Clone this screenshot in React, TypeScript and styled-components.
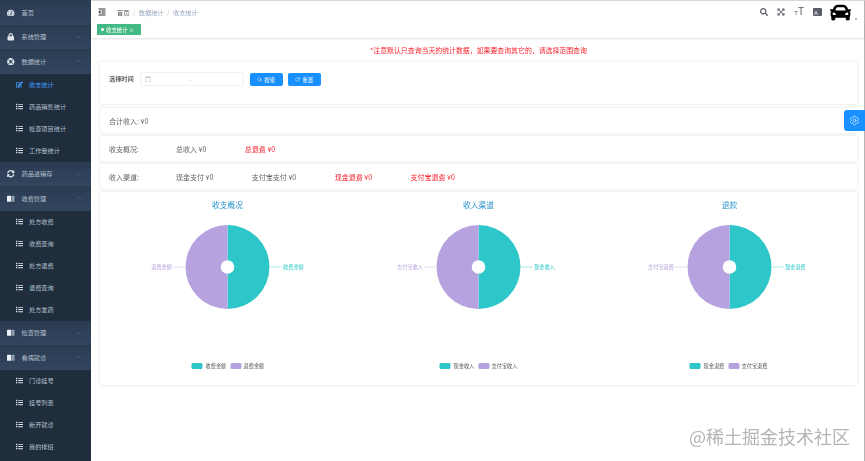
import { FC, ReactNode } from 'react'
import styled, { createGlobalStyle } from 'styled-components'
import {
    FaTachometerAlt, FaLock, FaLifeRing, FaList, FaEdit, FaSyncAlt,
    FaOutdent, FaSearch, FaExpandArrowsAlt, FaCar, FaRegCalendar, FaCaretDown,
} from 'react-icons/fa'
import { Search, RotateCw, ChevronDown, ChevronUp, Settings } from 'lucide-react'

const GlobalStyle = createGlobalStyle`
    html, body {
        margin: 0;
        padding: 0;
        background: white;
    }
    body {
        font-family: "Noto Sans CJK SC", "Liberation Sans", sans-serif;
        font-size: 6.2px;
        color: #606266;
    }
`;

const Layout = styled.div`
    display: flex;
    width: 865px;
    height: 461px;
    overflow: hidden;
    position: relative;
    filter: blur(0.3px);
`;

const Sidebar = styled.div`
    width: 91px;
    flex-shrink: 0;
    background: #1f2d3d;
    color: #b4c0ce;
`;

const ParentItem = styled.div`
    height: 24.5px;
    display: flex;
    align-items: center;
    gap: 7px;
    padding: 0 8px 0 7px;
    background: linear-gradient(180deg, #2a3b52 0%, #34465e 100%);

    & > svg:first-child {
        width: 7.5px;
        height: 7.5px;
        color: #dfe6ee;
    }

    & > svg:last-child:not(:first-child) {
        margin-left: auto;
        width: 8px;
        height: 8px;
        color: #5f7086;
    }
`;

const SubItem = styled.div<{ $active?: boolean }>`
    height: 22px;
    display: flex;
    align-items: center;
    gap: 6px;
    padding-left: 16px;
    color: ${p => (p.$active ? '#409eff' : '#b4c0ce')};

    svg {
        font-size: 7px;
        color: ${p => (p.$active ? '#409eff' : '#dfe6ee')};
    }
`;

const Main = styled.div`
    flex: 1;
    min-width: 0;
    display: flex;
    flex-direction: column;
    border-top: 1px solid #d8d8d8;
    border-right: 1px solid #b5b5b5;
`;

const Header = styled.div`
    height: 22px;
    display: flex;
    align-items: center;
    padding: 0 6px 0 7px;
    flex-shrink: 0;
`;

const Breadcrumb = styled.div`
    display: flex;
    align-items: center;
    margin-left: 11px;
    color: #97a8be;

    b {
        font-weight: 400;
        color: #50555c;
    }

    i {
        font-style: normal;
        margin: 0 3.5px;
        color: #c0c4cc;
    }
`;

const HeaderIcons = styled.div`
    margin-left: auto;
    display: flex;
    align-items: center;
    gap: 9px;
    color: #5a5e66;
    font-size: 8px;
`;

const SizeIcon = styled.span`
    font-family: "Liberation Sans", sans-serif;
    font-size: 10px;
    line-height: 1;

    small {
        font-size: 6px;
    }
`;

const Avatar = styled.div`
    display: flex;
    align-items: flex-end;
    gap: 3px;
    margin-left: -1px;
    color: #000;
    font-size: 21px;

    svg + svg {
        font-size: 4px;
        color: #5a5e66;
        margin-bottom: 2px;
    }
`;

const TagBar = styled.div`
    height: 15px;
    flex-shrink: 0;
    padding: 1px 6px;
    box-sizing: border-box;
    box-shadow: 0 1px 2px rgba(0, 0, 0, 0.12);
`;

const Tag = styled.div`
    width: 44px;
    height: 11px;
    display: flex;
    align-items: center;
    gap: 2px;
    padding-left: 4px;
    box-sizing: border-box;
    background: #42b983;
    color: white;
    font-size: 5.4px;

    &::before {
        content: '';
        width: 3px;
        height: 3px;
        border-radius: 50%;
        background: white;
    }
`;

const Content = styled.div`
    padding: 0 7px 0 9px;
    display: flex;
    flex-direction: column;
`;

const Notice = styled.div`
    height: 24px;
    display: flex;
    align-items: center;
    justify-content: center;
    font-size: 6.9px;
    color: #f5222d;
`;

const Card = styled.div`
    background: white;
    box-shadow: 0 0 3px rgba(0, 0, 0, 0.13);
    margin-bottom: 3px;
`;

const SearchCard = styled(Card)`
    height: 42px;
    margin-bottom: 4px;
    padding: 10px 9px 0;
    box-sizing: border-box;
    display: flex;
    align-items: flex-start;
`;

const FieldLabel = styled.span`
    font-weight: 700;
    color: #606266;
    line-height: 14px;
    margin-right: 6px;
`;

const DateInput = styled.div`
    width: 104px;
    height: 14px;
    box-sizing: border-box;
    border: 1px solid #f0f0f0;
    border-radius: 2px;
    display: flex;
    align-items: center;
    padding-left: 4px;
    color: #c0c4cc;
    margin-right: 6px;

    span {
        margin-left: 38px;
    }
`;

const Button = styled.div`
    width: 33px;
    height: 13px;
    margin: 1px 5px 0 0;
    display: flex;
    align-items: center;
    justify-content: center;
    gap: 2px;
    background: #1890ff;
    border-radius: 2px;
    color: white;
    font-size: 5.6px;
`;

const StatRow = styled(Card)`
    height: 25px;
    display: flex;
    align-items: center;
    gap: 38.5px;
    padding-left: 9px;
    font-size: 7px;
    white-space: nowrap;
`;

const StatLabel = styled.span`
    width: 28.5px;
`;

const Stat = styled.span<{ $danger?: boolean }>`
    color: ${p => (p.$danger ? '#f5222d' : '#606266')};
`;

const ChartsCard = styled(Card)`
    height: 193px;
    display: flex;
    justify-content: center;
`;

const ChartSvg = styled.svg`
    flex: 0 0 251px;
    height: 193px;
    font-family: "Noto Sans CJK SC", sans-serif;
`;

const SettingsButton = styled.div`
    position: absolute;
    top: 110px;
    right: 0;
    width: 21px;
    height: 21px;
    display: flex;
    align-items: center;
    justify-content: center;
    background: #1890ff;
    border-radius: 3px 0 0 3px;
    color: #d5e9ff;
`;

const Watermark = styled.div`
    position: absolute;
    right: 15px;
    bottom: 15px;
    font-size: 18px;
    line-height: 20px;
    color: #b4b4b4;
`;

// two tone book, react-icons has no close match for this one
const BookIcon: FC = () => (
    <svg viewBox="0 0 8 8">
        <rect x="0" y="0.8" width="4.4" height="6.4" rx="0.6" fill="#eef2f6" />
        <rect x="4.8" y="0.8" width="3.2" height="6.4" rx="0.6" fill="#8e9caf" />
    </svg>
);

const MenuParent: FC<{ icon: ReactNode; label: string; open?: boolean; noArrow?: boolean }> = ({ icon, label, open, noArrow }) => (
    <ParentItem>
        {icon}
        <span>{label}</span>
        {!noArrow && (open ? <ChevronUp strokeWidth={1.5} /> : <ChevronDown strokeWidth={1.5} />)}
    </ParentItem>
);

const SubList: FC<{ items: string[] }> = ({ items }) => (
    <>
        {items.map(item => (
            <SubItem key={item}><FaList />{item}</SubItem>
        ))}
    </>
);

// one echarts-like pie, coordinates are inside a 251 wide box
const Pie: FC<{ title: string; left: string; right: string; legendShift?: number }> = ({ title, left, right, legendShift = 0 }) => {
    const cx = 125.5;
    const cy = 75;
    const lx = cx + legendShift;
    return (
        <ChartSvg viewBox="0 0 251 193">
            <text x={cx} y={16} textAnchor="middle" fontSize="7.8" fill="#2f97d0">{title}</text>
            <path d={`M${cx} ${cy - 42}A42 42 0 0 1 ${cx} ${cy + 42}Z`} fill="#2ec7c9" />
            <path d={`M${cx} ${cy + 42}A42 42 0 0 1 ${cx} ${cy - 42}Z`} fill="#b6a2de" />
            <circle cx={cx} cy={cy} r="6.8" fill="white" />
            <path d={`M${cx + 43} ${cy}h11`} stroke="#2ec7c9" strokeWidth="0.4" />
            <path d={`M${cx - 43} ${cy}h-11`} stroke="#b6a2de" strokeWidth="0.4" />
            <text x={cx + 55.5} y={cy + 2} fontSize="5.2" fill="#2ec7c9">{right}</text>
            <text x={cx - 55.5} y={cy + 2} fontSize="5.2" textAnchor="end" fill="#b6a2de">{left}</text>
            <rect x={lx - 36} y={171} width="11" height="6" rx="1.5" fill="#2ec7c9" />
            <text x={lx - 22} y={176} fontSize="5.2" fill="#555">{right}</text>
            <rect x={lx + 3} y={171} width="11" height="6" rx="1.5" fill="#b6a2de" />
            <text x={lx + 16} y={176} fontSize="5.2" fill="#555">{left}</text>
        </ChartSvg>
    );
};

const App: FC = () => {
    return (
        <Layout>
            <GlobalStyle />
            <Sidebar>
                <MenuParent icon={<FaTachometerAlt />} label="首页" noArrow />
                <MenuParent icon={<FaLock />} label="系统管理" />
                <MenuParent icon={<FaLifeRing />} label="数据统计" open />
                <SubItem $active><FaEdit />收支统计</SubItem>
                <SubList items={['药品销售统计', '检查项目统计', '工作量统计']} />
                <MenuParent icon={<FaSyncAlt />} label="药品进销存" />
                <MenuParent icon={<BookIcon />} label="收费管理" open />
                <SubList items={['处方收费', '收费查询', '处方退费', '退费查询', '处方发药']} />
                <MenuParent icon={<BookIcon />} label="检查管理" />
                <MenuParent icon={<BookIcon />} label="看病就诊" open />
                <SubList items={['门诊挂号', '挂号列表', '新开就诊', '我的排班']} />
            </Sidebar>
            <Main>
                <Header>
                    <FaOutdent color="#333" size={8} />
                    <Breadcrumb>
                        <b>首页</b><i>/</i>数据统计<i>/</i>收支统计
                    </Breadcrumb>
                    <HeaderIcons>
                        <FaSearch />
                        <FaExpandArrowsAlt />
                        <SizeIcon><small>T</small>T</SizeIcon>
                        <svg width="9" height="8" viewBox="0 0 9 8">
                            <rect width="9" height="8" rx="1" fill="#5a5e66" />
                            <text x="1" y="6.5" fontSize="6" fill="white" fontFamily="Liberation Sans">A</text>
                        </svg>
                        <Avatar><FaCar /><FaCaretDown /></Avatar>
                    </HeaderIcons>
                </Header>
                <TagBar>
                    <Tag>收支统计 ×</Tag>
                </TagBar>
                <Content>
                    <Notice>*注意默认只查询当天的统计数据，如果要查询其它的，请选择范围查询</Notice>
                    <SearchCard>
                        <FieldLabel>选择时间</FieldLabel>
                        <DateInput><FaRegCalendar /><span>-</span></DateInput>
                        <Button><Search size={5} />搜索</Button>
                        <Button><RotateCw size={5} />重置</Button>
                    </SearchCard>
                    <StatRow><span>合计收入: ¥0</span></StatRow>
                    <StatRow>
                        <StatLabel>收支概况:</StatLabel>
                        <Stat>总收入 ¥0</Stat>
                        <Stat $danger>总退费 ¥0</Stat>
                    </StatRow>
                    <StatRow>
                        <StatLabel>收入渠道:</StatLabel>
                        <Stat>现金支付 ¥0</Stat>
                        <Stat>支付宝支付 ¥0</Stat>
                        <Stat $danger>现金退费 ¥0</Stat>
                        <Stat $danger>支付宝退费 ¥0</Stat>
                    </StatRow>
                    <ChartsCard>
                        <Pie title="收支概况" left="退费金额" right="收费金额" />
                        <Pie title="收入渠道" left="支付宝收入" right="现金收入" legendShift={-3} />
                        <Pie title="退款" left="支付宝退费" right="现金退费" legendShift={-4} />
                    </ChartsCard>
                </Content>
            </Main>
            <SettingsButton><Settings size={11} strokeWidth={1.5} /></SettingsButton>
            <Watermark>@稀土掘金技术社区</Watermark>
        </Layout>
    );
}

export default App;
